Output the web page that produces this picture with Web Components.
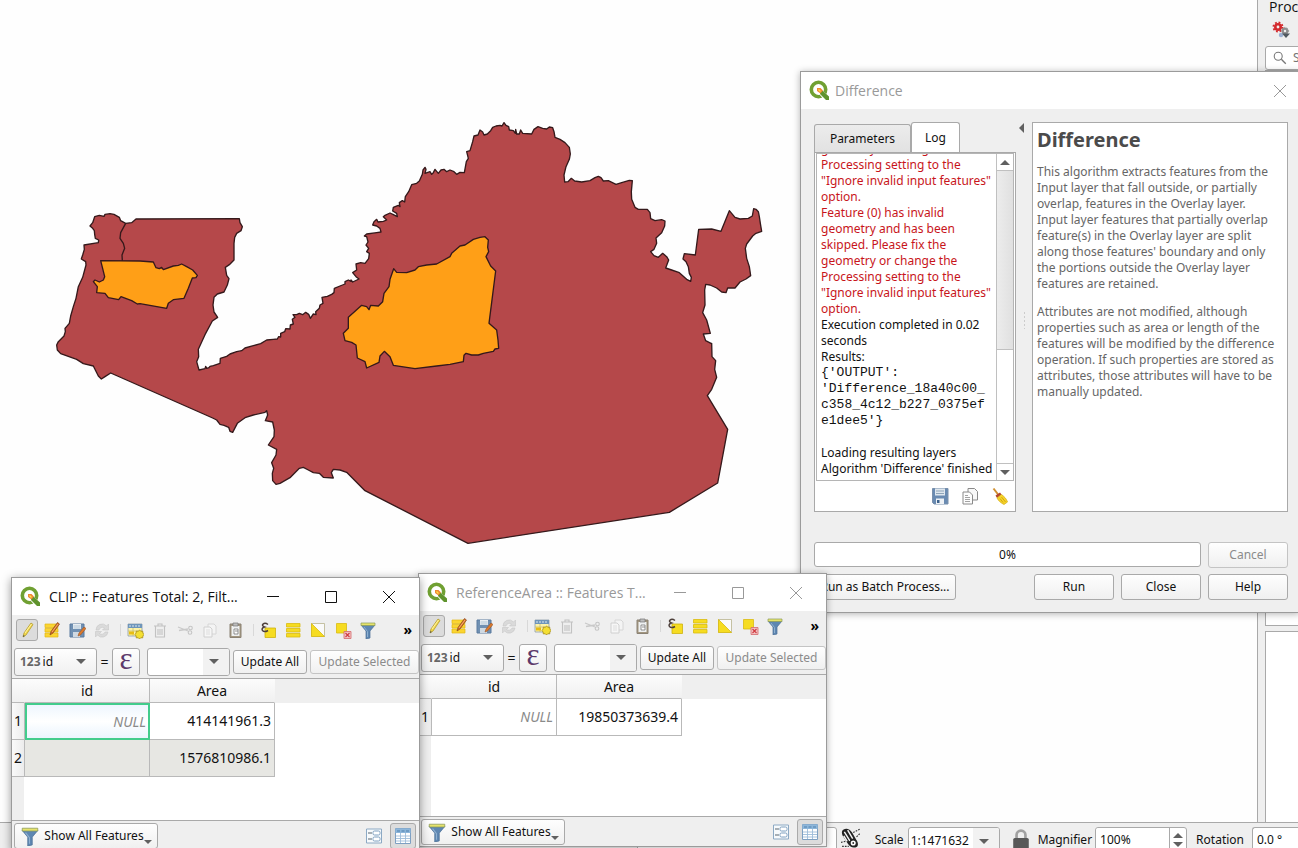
<!DOCTYPE html>
<html lang="en">
<head>
<meta charset="utf-8">
<title>Difference</title>
<style>
html, body{
    margin: 0;
    height: 100%;
    overflow: hidden;
}
body{
    font: 12px/16px "Noto Sans", "Open Sans", sans-serif;
    color: #111;
    --face: #efefef;
    --line: #a9a9a9;
}
</style>
</head>
<body>
<gis-desktop>
    <map-canvas></map-canvas>
    <toolbox-panel slot="panel"></toolbox-panel>
    <status-bar slot="status"></status-bar>

    <app-window slot="window" id="difference" caption="Difference" inactive closeonly>
        <algorithm-dialog></algorithm-dialog>
    </app-window>
    <app-window slot="window" id="reference" caption="ReferenceArea :: Features T..." inactive>
        <feature-table rows='[["NULL","19850373639.4"]]'></feature-table>
    </app-window>
    <app-window slot="window" id="clip" caption="CLIP :: Features Total: 2, Filt...">
        <feature-table current rows='[["NULL","414141961.3"],["","1576810986.1"]]'></feature-table>
    </app-window>
</gis-desktop>

<script>
const ICONS = {
    logo: `<circle cx="9.500" cy="9.500" r="7.200" fill="#fff" stroke="#70a032" stroke-width="3.600"/><path d="M10.500 13.500l4 4.500 2 2M13 11l6.500 6" fill="none" stroke="#fff" stroke-width="1.400"/><path d="M11 11h3l6 5.500V20h-3l-6-6z" fill="#5f932d"/><path d="M8 8h3.500l2.500 2.500-2.500 3L8 11z" fill="#ee8a32"/><path d="M9.500 9.500l2 2" stroke="#fbe34a" stroke-width="1.300"/>`,
    pencil: `<path d="M5 16l1-4 7-10 2 1.500-7 10.500z" fill="#f3d94c" stroke="#b39a2c" stroke-width=".8"/><path d="M7 12l6.500-9" stroke="#fff3a6"/><path d="M5 16l.6-2 1.200 1z" fill="#444"/>`,
    multiedit: `<path d="M2 3h13v3.500H2zM2 7.500h13V11H2zM2 12h13v4H2z" fill="#fbd531" stroke="#e2b816" stroke-width=".7"/><path d="M7 14l1-3.500 6.500-9 2 1.500-6.500 9z" fill="#d36a25" stroke="#874920" stroke-width=".7"/><path d="M9 11l6-8" stroke="#f7b06f"/>`,
    saveedit: `<path d="M2 3h14v13H2z" fill="#7090b2" stroke="#5b7b9f"/><path d="M5 3h8v5H5z" fill="#e9eef2"/><path d="M5 11h7v5H5z" fill="#cfd9e2"/><path d="M5.500 5h7M5.500 7h7" stroke="#9bb5cd" stroke-width=".7"/><path d="M10 15l1-3 5-6 2 1.500-5.500 6.500z" fill="#dc7a2b" stroke="#96532a" stroke-width=".6"/>`,
    reload: `<path d="M3 9a6 6 0 0 1 10.500-4L15.500 3v6h-6l2-2A3.500 3.500 0 0 0 6 9zM15 11a6 6 0 0 1-10.500 3l-2 2v-5.500h6l-2 2A3.500 3.500 0 0 0 12 11z" fill="#dadada" stroke="#c8c8c8" stroke-width=".6"/>`,
    addrow: `<path d="M2 3h14v12H2z" fill="#fdf3a8" stroke="#8d9ca9" stroke-width=".8"/><path d="M2 3h14v4H2z" fill="#6e95ba"/><path d="M3 5h12" stroke="#dbe7f1" stroke-dasharray="2 1"/><path d="M2 10h14M7 7v8" stroke="#c5bd77" stroke-width=".8"/><path d="M3 12h5" stroke="#e8bd13" stroke-width="3"/><path d="M13.500 9l1.300 1.300 1.900-.2.200 1.900 1.100 1.500-1.100 1.500-.2 1.900-1.900-.2-1.300 1.300-1.300-1.300-1.900.2-.2-1.900L9 13.500l1.100-1.500.2-1.900 1.900.2z" fill="#f4df32" stroke="#a58a18" stroke-width=".8"/>`,
    trash: `<path d="M3 5h12M7 5V3h4v2M4.500 5.500V16h9V5.500M7 8v6M9 8v6M11 8v6" fill="none" stroke="#c2c2c2" stroke-width="1.100"/>`,
    cut: `<path d="M2 6l10 4M3 9.500l9-1.500" stroke="#c9c9c9" stroke-width="1.300"/><circle cx="14.500" cy="7" r="1.800" fill="none" stroke="#c4c4c4" stroke-width="1.100"/><circle cx="14" cy="11.500" r="1.800" fill="none" stroke="#c4c4c4" stroke-width="1.100"/>`,
    copyoff: `<path d="M7 3h6l2 2v8H7z" fill="#f4f4f4" stroke="#d6d6d6"/><path d="M3 6h6l2 2v8H3z" fill="#f6f6f6" stroke="#d0d0d0"/><path d="M5 9h4M5 11h4M5 13h4" stroke="#d9d9d9" stroke-width=".8"/>`,
    paste: `<path d="M4 3h11v13.500H4z" fill="#a39780" stroke="#8b8274"/><path d="M5.500 5h8v10h-8z" fill="#eef0f1"/><path d="M7 2h5v3H7z" fill="#bcbcbc" stroke="#777" stroke-width=".7"/><path d="M8 8h4v5H8zM9 10h3" fill="#fff" stroke="#777" stroke-width=".8"/>`,
    exprselect: `<path d="M6 7h10.500v9.500H6z" fill="#f6dc21" stroke="#ceb20e" stroke-width=".8"/><path d="M9 3.500C5 .5 1 4.500 5.500 6 .5 7.500 4 12.500 9 9.500" fill="none" stroke="#4d3f3a" stroke-width="1.500"/>`,
    selectall: `<path d="M2.500 2.500h13.500v3.500H2.500zM2.500 7.500h13.500V11H2.500zM2.500 12.500h13.500V16H2.500z" fill="#f6dc21" stroke="#d9bb12" stroke-width=".8"/>`,
    invert: `<path d="M2.500 2.500h13v13h-13z" fill="#fafafa" stroke="#b9b48e" stroke-width=".8"/><path d="M2.500 2.500l13 13h-13z" fill="#f6dc21" stroke="#d9bb12" stroke-width=".8"/>`,
    deselect: `<path d="M2.500 2.500h10v9.500h-10z" fill="#f6dc21" stroke="#d9bb12" stroke-width=".8"/><path d="M10 10.500h7v7h-7z" fill="#f3c3c4" stroke="#d4686b" stroke-width=".8"/><path d="M11.500 16l4-4M11.500 12l4 4" stroke="#cf3b40" stroke-width="1.100"/>`,
    funnel: `<path d="M2 4h14l-5 6v7l-4 1v-8z" fill="#5e87b2" stroke="#4a6f97" stroke-width=".7"/><path d="M2 2h14v2.500H2z" fill="#e6e36a" stroke="#8b9b5a" stroke-width=".7"/><path d="M5 6l3.500 4.500V16" fill="none" stroke="#8fb0d0"/>`,
    formview: `<path d="M1.500 2h15v14h-15z" fill="#f7fafc" stroke="#8ca9c4"/><path d="M3 6h4M3 12h4" stroke="#58656f" stroke-width="1.200"/><rect x="8" y="4" width="7" height="4" rx="1.500" fill="#fff" stroke="#7fa0c0"/><rect x="8" y="10" width="7" height="4" rx="1.500" fill="#fff" stroke="#7fa0c0"/>`,
    tableview: `<path d="M1.500 1.500h15v15h-15z" fill="#fff" stroke="#7ea0c2"/><path d="M1.500 1.500h15V6h-15z" fill="#8db6da"/><path d="M2 9h14M2 11.500h14M2 14h14M6.500 6v10M11.500 6v10" stroke="#9dbcd9" stroke-width=".9"/><path d="M3 4h12" stroke="#4f80ad" stroke-dasharray="3 1.500"/>`,
    floppy: `<path d="M1.500 1.500h15.500v15.500H3l-1.500-1.500z" fill="#6a8bb2" stroke="#7990ac"/><path d="M4 1.500h10v7H4z" fill="#dfe7ee"/><path d="M5 4h8M5 6.500h8" stroke="#8fa5b9"/><path d="M5 11.500h8V17H5z" fill="#eef2f6"/><path d="M6 13h2.500v3H6z" fill="#3e638d"/>`,
    copy: `<path d="M7 1.500h6.500l3 3V13H7z" fill="#f8f8f8" stroke="#8a8a8a"/><path d="M2 5h6.500l3 3v9H2z" fill="#fdfdfd" stroke="#8a8a8a"/><path d="M4 8.500h3M4 10.500h5M4 12.500h5M4 14.500h5" stroke="#999" stroke-width=".9"/>`,
    broom: `<path d="M2.500 1.500l5 6.500" stroke="#d09030" stroke-width="2"/><path d="M4.500 8.500l4.500-3 1.500 2-4.500 3.500z" fill="#b4472b"/><path d="M6 11l4.500-3.500c2.500 2 5 4 6 7.500l-3.500 2.500c-3-1.500-5.500-3.500-7-6.500z" fill="#f7d427" stroke="#d0a813" stroke-width=".7"/><path d="M9 11.500l3 4M10.500 10l4 5" stroke="#c59a10" stroke-width=".8"/>`,
    gears: `<circle cx="6" cy="6" r="2.700" fill="none" stroke="#d3292d" stroke-width="2.600"/><circle cx="6" cy="6" r="4.600" fill="none" stroke="#d3292d" stroke-width="1.800" stroke-dasharray="1.800 1.813"/><circle cx="13" cy="10" r="2.200" fill="none" stroke="#8d8d8d" stroke-width="2"/><circle cx="13" cy="10" r="3.600" fill="none" stroke="#8d8d8d" stroke-width="1" stroke-dasharray="1.300 1.300"/><circle cx="9" cy="14" r="2.200" fill="#9cb1d3"/><path d="M10 12.500h8l-4 4.500z" fill="#50595f"/>`,
    lens: `<circle cx="7" cy="7" r="4.500" fill="none" stroke="#777" stroke-width="1.200"/><path d="M10.500 10.500l5 5" stroke="#777" stroke-width="1.500"/>`,
    mouse: `<path d="M2 1.500C5-.5 8 1 10 4l4 7c2 3 1.500 6-1 6.500-3 .5-5-.5-7-3.500L1.500 7C.5 4.500.5 2.500 2 1.500z" fill="#222"/><path d="M3 3.500l5 8M6 2l4.500 7.500M2.500 7l3 5" stroke="#f5f5f5" stroke-width="1.300"/><circle cx="11" cy="13.500" r="2.800" fill="#fff" stroke="#222"/><circle cx="11" cy="13.500" r=".8" fill="#222"/><path d="M11 4l6-3M0 13l4-1M1 16.500h6M14 8l3-3" stroke="#333" stroke-dasharray="1.500 1"/>`,
    lock: `<path d="M5 9V5.500a4 4 0 0 1 8 0V9" fill="none" stroke="#a1a1a1" stroke-width="2.400"/><rect x="2" y="8" width="14" height="11" rx="1.500" fill="#585858"/>`,
}


class SvgIcon extends HTMLElement{
    connectedCallback(){
        benry(this, ['name'])
        this.$.innerHTML += `<svg viewBox="0 0 ${this.name === 'logo' ? '21 21' : '18 18'}" aria-hidden="true">${ICONS[this.name]}</svg>`
    }

    get html(){
        return `
        <style>
        :host{
            display: block;
            flex: none;
            width: 18px;
            height: 18px;
        }
        svg{
            display: block;
            width: 100%;
            height: 100%;
        }
        </style>
        `
    }
}


class ArrowMark extends HTMLElement{
    connectedCallback(){
        benry(this)
    }

    get html(){
        return `
        <style>
        :host{
            display: block;
            width: 0;
            border: 5px solid transparent;
            border-top-color: #606060;
            border-bottom-width: 0;
        }
        :host([up]){
            border-width: 0 5px 5px;
            border-bottom-color: #606060;
        }
        :host([left]){
            border-width: 5px 5px 5px 0;
            border-color: transparent #606060;
        }
        </style>
        `
    }
}


class PushButton extends HTMLElement{
    connectedCallback(){
        benry(this)
        this.$button.disabled = this.hasAttribute('disabled')
    }

    get html(){
        return `
        <button id="button" type="button"><slot></slot></button>
        <style>
        :host{
            display: block;
            height: 26px;
        }
        button{
            box-sizing: border-box;
            display: flex;
            align-items: center;
            justify-content: center;
            gap: 4px;
            width: 100%;
            height: 100%;
            margin: 0;
            padding: 0;
            border: 1px solid var(--line);
            border-radius: 3px;
            background: linear-gradient(#fefefe, #f0f0f0);
            color: #111;
            font: inherit;
            white-space: nowrap;
        }
        button:disabled{
            color: #8b8b8b;
            border-color: #c4c4c4;
        }
        </style>
        `
    }
}


class ToolButton extends HTMLElement{
    connectedCallback(){
        benry(this, ['icon', 'label'])
        this.$button.innerHTML = `<svg-icon name="${this.icon}"></svg-icon>`
        this.$button.setAttribute('aria-label', this.label)
    }

    get html(){
        return `
        <button id="button" type="button"></button>
        <style>
        :host{
            display: block;
            flex: none;
            width: 22px;
            height: 22px;
        }
        button{
            box-sizing: border-box;
            display: grid;
            place-content: center;
            width: 100%;
            height: 100%;
            margin: 0;
            padding: 0;
            border: 0;
            background: none;
        }
        :host([pressed]) button{
            border: 1px solid #aaa;
            border-radius: 3px;
            background: #dcdcdc;
        }
        </style>
        `
    }
}


class ComboBox extends HTMLElement{
    connectedCallback(){
        benry(this, ['value', 'label', 'badge'])
        this.$type.textContent = this.badge || ''
        this.$select.innerHTML = `<option>${this.value || ''}</option>`
        this.$select.setAttribute('aria-label', this.label)
    }

    get html(){
        return `
        <b id="type"></b>
        <select id="select"></select>
        <span><arrow-mark></arrow-mark></span>
        <style>
        :host{
            box-sizing: border-box;
            display: grid;
            grid-template-columns: auto 1fr 26px;
            align-items: center;
            height: 28px;
            border: 1px solid var(--line);
            border-radius: 3px;
            background: linear-gradient(#fefefe, #f0f0f0);
            overflow: hidden;
        }
        :host([editable]){
            background: #fff;
        }
        #type{
            padding-left: 5px;
            color: #666;
            font-size: 12px;
        }
        #type:empty{
            padding: 0;
        }
        select{
            grid-column: 2 / 4;
            grid-row: 1;
            appearance: none;
            width: 100%;
            height: 26px;
            padding: 0 2px;
            border: 0;
            background: none;
            color: #111;
            font: inherit;
        }
        span{
            box-sizing: border-box;
            grid-column: 3;
            grid-row: 1;
            display: grid;
            place-content: center;
            height: 26px;
            padding-right: 4px;
        }
        :host([editable]) span{
            background: #f2f2f2;
        }
        </style>
        `
    }
}


class AppWindow extends HTMLElement{
    connectedCallback(){
        benry(this, ['caption'])
        this.$caption.textContent = this.caption
    }

    get html(){
        return `
        <header>
            <svg-icon name="logo"></svg-icon>
            <span id="caption"></span>
            <nav>
                <button class="more" type="button" aria-label="Minimize"><svg viewBox="0 0 12 12"><path d="M0 5.500h12"/></svg></button>
                <button class="more" type="button" aria-label="Maximize"><svg viewBox="0 0 12 12"><path d="M.5.500h11v11H.5z"/></svg></button>
                <button type="button" aria-label="Close"><svg viewBox="0 0 12 12"><path d="M0 0l12 12M12 0L0 12"/></svg></button>
            </nav>
        </header>
        <slot></slot>
        <style>
        :host{
            box-sizing: border-box;
            display: flex;
            flex-direction: column;
            border: 1px solid #9b9b9b;
            background: var(--face);
            box-shadow: 0 2px 9px rgba(0, 0, 0, .4);
        }
        :host([inactive]){
            box-shadow: 0 1px 7px rgba(0, 0, 0, .3);
        }
        header{
            flex: none;
            display: flex;
            align-items: center;
            gap: 8px;
            height: 37px;
            padding: 0 1px 0 8px;
            background: #fff;
            color: #111;
            font: 14px/20px "Open Sans", "Noto Sans", sans-serif;
        }
        :host([inactive]) header{
            color: #999;
        }
        header svg-icon{
            width: 21px;
            height: 21px;
        }
        :host([closeonly]) header{
            gap: 5px;
            padding-right: 0;
        }
        #caption{
            flex: 1;
            min-width: 0;
            white-space: nowrap;
        }
        nav{
            display: flex;
        }
        nav button{
            display: grid;
            place-content: center;
            width: 58px;
            height: 37px;
            padding: 0;
            border: 0;
            background: none;
            color: inherit;
        }
        :host([closeonly]) .more{
            display: none;
        }
        :host([closeonly]) nav button{
            width: 38px;
        }
        nav svg{
            width: 12px;
            height: 12px;
            fill: none;
            stroke: currentColor;
            overflow: visible;
        }
        </style>
        `
    }
}


class FeatureTable extends HTMLElement{
    connectedCallback(){
        benry(this, ['rows'])
        JSON.parse(this.rows).forEach(([id, area], i) => {
            this.$body.insertAdjacentHTML('beforeend', `<tr><th scope="row">${i + 1}</th><td><i>${id}</i></td><td>${area}</td></tr>`)
        })
    }

    get html(){
        return `
        <div id="tools">
            <tool-button icon="pencil" label="Toggle editing" pressed></tool-button>
            <tool-button icon="multiedit" label="Multi edit"></tool-button>
            <tool-button icon="saveedit" label="Save edits"></tool-button>
            <tool-button icon="reload" label="Reload"></tool-button>
            <hr>
            <tool-button icon="addrow" label="Add feature"></tool-button>
            <tool-button icon="trash" label="Delete"></tool-button>
            <tool-button icon="cut" label="Cut"></tool-button>
            <tool-button icon="copyoff" label="Copy"></tool-button>
            <tool-button icon="paste" label="Paste"></tool-button>
            <hr>
            <tool-button icon="exprselect" label="Select by expression"></tool-button>
            <tool-button icon="selectall" label="Select all"></tool-button>
            <tool-button icon="invert" label="Invert selection"></tool-button>
            <tool-button icon="deselect" label="Deselect all"></tool-button>
            <tool-button icon="funnel" label="Filter"></tool-button>
            <button id="more" type="button">»</button>
        </div>
        <div id="calc">
            <combo-box id="field" badge="123" value="id" label="Field"></combo-box>
            <span>=</span>
            <push-button id="expr"><span id="epsilon">ε</span></push-button>
            <combo-box id="value" editable label="Value"></combo-box>
            <push-button id="all">Update All</push-button>
            <push-button id="selected" disabled>Update Selected</push-button>
        </div>
        <div id="view">
            <table>
                <colgroup><col id="c0"><col id="c1"><col id="c2"></colgroup>
                <thead><tr><th></th><th scope="col">id</th><th scope="col">Area</th></tr></thead>
                <tbody id="body"></tbody>
            </table>
        </div>
        <footer>
            <push-button id="show"><svg-icon name="funnel"></svg-icon><span>Show All Features</span><arrow-mark></arrow-mark></push-button>
            <tool-button icon="formview" label="Form view"></tool-button>
            <tool-button icon="tableview" label="Table view" pressed></tool-button>
        </footer>
        <style>
        :host{
            flex: 1;
            display: flex;
            flex-direction: column;
            min-height: 0;
        }
        #tools{
            flex: none;
            display: flex;
            align-items: center;
            gap: 3px;
            height: 30px;
            padding: 0 4px;
        }
        hr{
            box-sizing: border-box;
            width: 5px;
            height: 12px;
            margin: 0;
            border: solid #d8d8d8;
            border-width: 0 1px 0 0;
        }
        #more{
            margin-left: auto;
            padding: 0 3px;
            border: 0;
            background: none;
            font: bold 14px/20px "Noto Sans", sans-serif;
        }
        #calc{
            flex: none;
            display: flex;
            align-items: center;
            height: 33px;
            padding-left: 2px;
        }
        #field, #value{
            width: 83px;
        }
        #calc > span{
            width: 15px;
            text-align: center;
            font-size: 14px;
        }
        #expr{
            width: 28px;
            height: 28px;
            margin-right: 7px;
        }
        #epsilon{
            height: 26px;
            color: #5d3a6c;
            font: 31px/20px "Liberation Serif", serif;
        }
        #all, #selected{
            height: 24px;
            margin-left: 3px;
        }
        #all{
            width: 74px;
        }
        #selected{
            flex: 1;
        }
        #view{
            flex: 1;
            border: solid var(--line);
            border-width: 1px 0;
            background:
                linear-gradient(var(--face) 0 0) 0 0 / 100% 24px no-repeat,
                linear-gradient(var(--face) 0 0) 0 0 / 12px 100% no-repeat,
                #fff;
        }
        table{
            table-layout: fixed;
            width: 263px;
            border-collapse: separate;
            border-spacing: 0;
            font-size: 14px;
            line-height: 20px;
        }
        #c0{
            width: 13px;
        }
        th, td{
            box-sizing: border-box;
            height: 37px;
            padding: 0 3px;
            border: solid #b9b9b9;
            border-width: 0 1px 1px 0;
            font-weight: normal;
            text-align: right;
        }
        tbody th{
            padding: 0;
            text-align: center;
            background: linear-gradient(90deg, #fafafa, #ececec);
        }
        thead th{
            height: 24px;
            text-align: center;
            background: linear-gradient(#fcfcfc, #f0f0f0);
        }
        thead th:first-child, thead th:last-child{
            border-right-color: transparent;
        }
        tr:nth-child(2) td{
            background: #e7e7e3;
        }
        i{
            color: #8a8a8a;
        }
        :host([current]) tr:first-child td:nth-child(2){
            padding-right: 2px;
            background: linear-gradient(#eef6fe, #fff 50%, #eaf5fe);
            border: 2px solid #42cc8c;
        }
        footer{
            flex: none;
            display: flex;
            align-items: center;
            gap: 3px;
            height: 29px;
            padding: 0 3px 0 2px;
        }
        #show{
            width: 144px;
            margin-right: auto;
        }
        #show svg-icon{
            width: 20px;
            height: 20px;
        }
        #show arrow-mark{
            align-self: flex-end;
            margin: 0 0 4px -4px;
            border-width: 4px 4px 0;
        }
        footer tool-button{
            width: 26px;
            height: 26px;
        }
        </style>
        `
    }
}


class AlgorithmDialog extends HTMLElement{
    connectedCallback(){
        benry(this)
    }

    get html(){
        return `
        <main>
            <div id="left">
                <div id="tabs">
                    <button type="button">Parameters</button>
                    <button type="button" class="on">Log</button>
                </div>
                <div id="pane">
                    <div id="log">
                        <div id="text">
                            <p class="error">geometry or change the<br>Processing setting to the<br>"Ignore invalid input features"<br>option.</p>
                            <p class="error">Feature (0) has invalid<br>geometry and has been<br>skipped. Please fix the<br>geometry or change the<br>Processing setting to the<br>"Ignore invalid input features"<br>option.</p>
                            <p>Execution completed in 0.02<br>seconds</p>
                            <p>Results:</p>
                            <pre>{'OUTPUT':
'Difference_18a40c00_
c358_4c12_b227_0375ef
e1dee5'}</pre>
                            <p><br>Loading resulting layers</p>
                            <p>Algorithm 'Difference' finished</p>
                        </div>
                        <div id="scroll">
                            <span><arrow-mark up></arrow-mark></span>
                            <i></i>
                            <span><arrow-mark></arrow-mark></span>
                        </div>
                    </div>
                    <div id="actions">
                        <tool-button icon="floppy" label="Save log"></tool-button>
                        <tool-button icon="copy" label="Copy log"></tool-button>
                        <tool-button icon="broom" label="Clear log"></tool-button>
                    </div>
                </div>
            </div>
            <div id="split"><arrow-mark left></arrow-mark><i></i></div>
            <article>
                <h2>Difference</h2>
                <p>This algorithm extracts features from the<br>Input layer that fall outside, or partially<br>overlap, features in the Overlay layer.<br>Input layer features that partially overlap<br>feature(s) in the Overlay layer are split<br>along those features' boundary and only<br>the portions outside the Overlay layer<br>features are retained.</p>
                <p>Attributes are not modified, although<br>properties such as area or length of the<br>features will be modified by the difference<br>operation. If such properties are stored as<br>attributes, those attributes will have to be<br>manually updated.</p>
            </article>
        </main>
        <footer>
            <div id="progress" role="progressbar" aria-valuenow="0">0%</div>
            <push-button disabled>Cancel</push-button>
            <push-button id="batch">Run as Batch Process...</push-button>
            <push-button>Run</push-button>
            <push-button>Close</push-button>
            <push-button>Help</push-button>
        </footer>
        <style>
        :host{
            flex: 1;
            display: flex;
            flex-direction: column;
            gap: 30px;
            padding: 13px 11px 12px 13px;
        }
        main{
            flex: 1;
            display: grid;
            grid-template-columns: 202px 16px 1fr;
        }
        p, pre, h2{
            margin: 0;
        }
        #left{
            display: flex;
            flex-direction: column;
        }
        #tabs{
            display: flex;
            align-items: flex-end;
            height: 30px;
        }
        #tabs button{
            box-sizing: border-box;
            width: 97px;
            height: 28px;
            padding: 0;
            border: 1px solid var(--line);
            border-bottom: 0;
            border-radius: 3px 3px 0 0;
            background: linear-gradient(#ececec, #e2e2e2);
            color: #111;
            font: 12px/16px "Noto Sans", sans-serif;
        }
        #tabs .on{
            width: 49px;
            height: 30px;
            background: #fff;
        }
        #pane{
            flex: 1;
            display: flex;
            flex-direction: column;
            padding: 0 1px 1px;
            border: 1px solid var(--line);
            background: #fff;
        }
        #log{
            flex: 1;
            display: flex;
            border: 1px solid #b5b5b5;
        }
        #text{
            flex: 1;
            display: flex;
            flex-direction: column;
            justify-content: flex-end;
            height: 323px;
            padding: 0 0 3px 4px;
            overflow: hidden;
            white-space: nowrap;
        }
        .error{
            color: #c8151b;
        }
        pre{
            font: 13px/16px "Liberation Mono", monospace;
        }
        #scroll{
            display: flex;
            flex-direction: column;
            width: 16px;
            border-left: 1px solid #c0c0c0;
        }
        #scroll span{
            display: grid;
            place-content: center;
            height: 16px;
        }
        #scroll span:last-child{
            margin-top: auto;
            border-top: 1px solid #c0c0c0;
        }
        #scroll i{
            height: 178px;
            border: solid #c0c0c0;
            border-width: 1px 0;
            background: linear-gradient(90deg, #ececec, #e0e0e0);
        }
        #actions{
            display: flex;
            align-items: center;
            justify-content: flex-end;
            gap: 8px;
            height: 29px;
            padding-right: 3px;
        }
        #split{
            display: flex;
            flex-direction: column;
            align-items: center;
            justify-content: space-between;
            padding: 1px 0 183px;
        }
        #split arrow-mark{
            margin-right: 5px;
        }
        #split i{
            width: 3px;
            height: 18px;
            background: radial-gradient(#ccc 1px, transparent 1px) 0 0 / 3px 4px;
        }
        article{
            padding: 4px;
            border: 1px solid var(--line);
            background: #fff;
            color: #666;
            white-space: nowrap;
        }
        h2{
            color: #4b4b4b;
            font: bold 20px/26px "Noto Sans", sans-serif;
        }
        h2 + p{
            margin: 11px 0 12px;
        }
        footer{
            display: grid;
            grid-template-columns: 142px 1fr 80px 80px 80px;
            gap: 6px 7px;
        }
        #progress{
            grid-column: 1 / 5;
            box-sizing: border-box;
            height: 25px;
            border: 1px solid var(--line);
            border-radius: 3px;
            background: #fff;
            line-height: 24px;
            text-align: center;
        }
        #batch{
            grid-column: 1 / 2;
        }
        #batch + push-button{
            grid-column: 3;
        }
        </style>
        `
    }
}


class ToolboxPanel extends HTMLElement{
    connectedCallback(){
        benry(this)
    }

    get html(){
        return `
        <h3>Proc</h3>
        <svg-icon name="gears"></svg-icon>
        <label><svg-icon name="lens"></svg-icon><input placeholder="S" aria-label="Search"></label>
        <div id="tree"></div>
        <div id="history"></div>
        <style>
        :host{
            box-sizing: border-box;
            display: flex;
            flex-direction: column;
            width: 41px;
            height: 100%;
            padding-left: 7px;
            border-left: 1px solid var(--line);
            overflow: hidden;
        }
        h3{
            margin: 0 0 7px;
            padding: 0 0 0 4px;
            font: 14px/14px "Open Sans", sans-serif;
        }
        h3 + svg-icon{
            margin: 0 0 7px 7px;
        }
        label{
            display: flex;
            align-items: center;
            gap: 3px;
            width: 120px;
            height: 22px;
            padding-left: 6px;
            border: 1px solid var(--line);
            border-radius: 3px;
            background: #fff;
        }
        label svg-icon{
            width: 16px;
            height: 16px;
        }
        input{
            width: 60px;
            padding: 0 2px;
            border: 0;
            font: inherit;
        }
        #tree{
            flex: 1;
            border: 1px solid var(--line);
            border-right: 0;
            background: #fff;
        }
        #history{
            height: 190px;
            margin-top: 5px;
            border: 1px solid var(--line);
            border-width: 1px 0 0 1px;
            background: #fff;
        }
        </style>
        `
    }
}


class StatusBar extends HTMLElement{
    connectedCallback(){
        benry(this)
    }

    get html(){
        return `
        <input id="coords" aria-label="Coordinate">
        <svg-icon name="mouse"></svg-icon>
        <span>Scale</span>
        <combo-box editable value="1:1471632" label="Scale"></combo-box>
        <svg-icon name="lock"></svg-icon>
        <label for="magnifier">Magnifier</label>
        <div id="spin">
            <input id="magnifier" value="100%">
            <span><arrow-mark up></arrow-mark><arrow-mark></arrow-mark></span>
        </div>
        <label for="rotation">Rotation</label>
        <input id="rotation" value="0.0 °">
        <style>
        :host{
            box-sizing: border-box;
            display: flex;
            justify-content: flex-end;
            height: 26px;
            padding-top: 4px;
            border-top: 1px solid var(--line);
            overflow: hidden;
            line-height: 26px;
        }
        input{
            box-sizing: border-box;
            height: 26px;
            padding: 0 4px;
            border: 1px solid var(--line);
            border-radius: 3px;
            background: #fff;
            color: #111;
            font: inherit;
        }
        #coords{
            width: 200px;
        }
        svg-icon{
            width: 20px;
            height: 20px;
            margin: 1px 14px 0 4px;
        }
        combo-box{
            width: 92px;
            height: 26px;
            margin-left: 4px;
        }
        combo-box + svg-icon{
            margin: 2px 7px 0 11px;
        }
        #spin{
            box-sizing: border-box;
            display: flex;
            width: 92px;
            height: 26px;
            margin: 0 9px 0 3px;
            border: 1px solid var(--line);
            border-radius: 3px;
            background: #fff;
        }
        #spin input{
            flex: 1;
            min-width: 0;
            height: 24px;
            border: 0;
        }
        #spin span{
            display: grid;
            place-content: center;
            gap: 4px;
            width: 16px;
            border-left: 1px solid var(--line);
        }
        #rotation{
            width: 46px;
            margin-left: 8px;
            border-radius: 3px 0 0 3px;
            border-right: 0;
        }
        </style>
        `
    }
}


// Each stretch of the outline is kept relative to its own sheet origin, three units to the pixel
const SHEETS = {a: [120, 570], b: [750, 330], c: [1620, 330], d: [750, 1020]}

const DISTRICT = [
    ['a', '132,165 175,158 176,150 166,145 164,133 163,122 158,115 150,108 158,98 164,80 178,76 192,79 195,73 210,71 222,73 238,82 242,92 257,100 275,98 288,87 598,86 600,98 607,110 603,122 590,130 584,142 582,160 582,210 568,224 556,232 560,256 567,266 562,285 552,306 532,312 522,322 519,345 522,366 533,382 517,393 495,434 475,478 476,500 470,515 477,540 495,536 497,529 500,535 507,533 510,529 520,527 540,520 541,505 560,499 570,492 590,485 605,482 615,474 640,467 662,461 680,450 700,448 712,447 716,440 722,441 722,430 734,425 737,416 750,417 751,405 760,402 757,388 765,382 759,374 770,374 778,370 788,374 797,367 806,373 811,385 820,372 828,374 827,365 838,355 840,345 849,340 846,322 862,319 875,313 882,308 883,295 900,288 915,282 915,275 925,270 933,274'],
    ['b', '303,510 308,516 327,507 318,500 308,488 320,480 318,462 332,458 345,460 356,446 358,430 350,425 356,415 348,405 354,396 350,380 343,378 350,372 380,368 393,366 390,355 380,348 368,345 372,335 380,328 384,336 400,334 410,330 400,320 405,316 420,309 430,314 442,320 440,310 428,303 430,292 445,286 450,290 448,278 457,272 464,276 466,260 476,245 485,224 500,220 508,213 517,193 519,180 525,172 528,178 525,190 540,185 545,193 550,188 555,178 565,190 573,180 582,178 590,185 600,180 612,185 620,193 630,187 643,188 649,155 655,145 650,125 660,122 668,95 672,78 684,75 690,60 698,66 702,75 712,72 722,62 728,52 738,48 750,46 756,48 762,38 768,46 776,50 778,60 790,62 796,70 797,58 800,72 808,72 812,60 818,70 845,72 852,58 864,50 878,55 890,57 898,51 908,53 912,65 915,82'],
    ['c', '60,88 75,98 88,112 91,132 88,148 78,170 72,195 74,216 84,215 94,205 104,213 125,216 150,212 165,203 175,199 183,203 190,213 205,212 228,223 245,218 268,211 277,212 274,245 275,268 285,292 295,298 322,298 330,308 332,326 345,332 365,329 375,333 374,348 365,368 348,384 350,400 342,418 332,425 342,437 355,442 368,430 380,440 386,450 377,474 395,480 418,488 440,508 452,514 454,502 448,490 445,470 438,455 429,447 433,431 466,435 476,358 515,357 543,364 568,302 585,322 600,327 625,325 637,318 641,296 648,298 655,305 658,320 661,340 665,364 648,370 638,378 620,402 616,415 620,445 628,470 632,497 618,507 600,516 585,534 563,534 558,548 545,546 530,534 510,525 497,523 494,540 495,585 488,608 500,630 511,670 490,672 497,692 513,700'],
    ['d', '1385,10 1386,50 1397,62 1394,88 1400,112 1385,148 1372,167 1433,268 1403,429 1258,517 654,610 345,452 290,397 270,390 250,388 244,398 250,414 220,412 208,400 190,398 175,390 160,382 148,385 120,413 90,430 78,433 68,422 67,400 71,385 65,368 78,345 80,328 55,315 72,290 73,270 68,246 46,242 53,225 50,212'],
    ['a', '675,667 640,675 615,683 592,700 578,727 570,724 566,712 552,706 540,703 530,690 518,684 212,549 195,560 184,567 175,558 160,528 130,521 110,508 62,491 52,480 50,465 55,455 72,438 76,425 75,415 88,400 92,378 100,350 108,325 115,290 128,262 138,225 137,215 124,207 128,195 133,178'],
]
const BOUNDARY = [['a', '257,100 242,128 240,145 250,160 254,175 246,195 247,212']]
const CLIP_WEST = [['a', '182,212 300,213 340,216 348,233 358,236 365,232 370,239 400,228 415,226 425,222 440,230 458,240 472,256 468,263 457,264 445,295 432,325 400,329 385,340 380,355 300,341 292,342 275,332 243,320 236,329 205,323 195,310 170,308 172,290 160,275 165,270 178,276 190,270 194,260']]
const CLIP_EAST = [['b', '431,476 440,487 470,488 495,480 505,470 530,465 560,462 600,440 605,430 630,408 645,405 670,388 690,382 705,380 715,390 713,412 716,425 708,440 722,468 737,483 717,640 740,660 744,690 746,715 735,717 730,724 700,730 685,735 665,735 648,730 642,736 640,755 600,763 560,768 495,776 430,766 420,740 403,724 390,738 387,757 350,774 345,755 322,744 318,705 305,697 285,692 280,670 295,655 295,622 335,586 350,590 357,599 362,586 385,588 398,575 402,550 417,530 420,508']]

function trace(parts){
    return parts.flatMap(([sheet, points]) => points.split(' ').map(point => {
        const [x, y] = point.split(',').map(Number)
        return `${x + SHEETS[sheet][0]},${y + SHEETS[sheet][1]}`
    })).join(' ')
}


class MapCanvas extends HTMLElement{
    connectedCallback(){
        benry(this)
    }

    get html(){
        return `
        <svg viewBox="0 0 3771 2466" preserveAspectRatio="xMinYMin meet" role="img" aria-label="Map">
            <polygon fill="#b5484a" points="${trace(DISTRICT)}"/>
            <polyline fill="none" points="${trace(BOUNDARY)}"/>
            <polygon fill="#ff9f17" points="${trace(CLIP_WEST)}"/>
            <polygon fill="#ff9f17" points="${trace(CLIP_EAST)}"/>
        </svg>
        <style>
        :host{
            display: block;
            height: 100%;
            background: #fefefe;
            overflow: hidden;
        }
        svg{
            display: block;
            width: 100%;
            stroke: #35191b;
            stroke-width: 4;
            stroke-linejoin: round;
        }
        </style>
        `
    }
}


class GisDesktop extends HTMLElement{
    connectedCallback(){
        benry(this)
    }

    get html(){
        return `
        <slot></slot>
        <slot name="panel"></slot>
        <slot name="status"></slot>
        <slot name="window"></slot>
        <style>
        :host{
            position: relative;
            display: grid;
            grid-template: minmax(0, 1fr) 26px / minmax(0, 1fr) auto;
            height: 100vh;
            background: var(--face);
            overflow: hidden;
        }
        ::slotted(status-bar){
            grid-column: 1 / 3;
        }
        ::slotted(app-window){
            position: absolute;
            width: 409px;
            height: 274px;
        }
        ::slotted(#difference){
            left: 800px;
            top: 71px;
            width: 500px;
            height: 542px;
        }
        ::slotted(#reference){
            left: 418px;
            top: 573px;
        }
        ::slotted(#clip){
            left: 11px;
            top: 577px;
        }
        </style>
        `
    }
}


function benry(self, attr = []){
    self.$ = self.attachShadow({mode:'open'})
    self.$.innerHTML = self.html || ''

    for(const el of self.$.querySelectorAll('[id]')){
        self[`$${el.id}`] = el
    }

    for(const name of attr){
        self[name] = self.getAttribute(name)
    }
}


customElements.define('svg-icon', SvgIcon)
customElements.define('arrow-mark', ArrowMark)
customElements.define('push-button', PushButton)
customElements.define('tool-button', ToolButton)
customElements.define('combo-box', ComboBox)
customElements.define('feature-table', FeatureTable)
customElements.define('algorithm-dialog', AlgorithmDialog)
customElements.define('toolbox-panel', ToolboxPanel)
customElements.define('status-bar', StatusBar)
customElements.define('map-canvas', MapCanvas)
customElements.define('app-window', AppWindow)
customElements.define('gis-desktop', GisDesktop)
</script>
</body>
</html>
